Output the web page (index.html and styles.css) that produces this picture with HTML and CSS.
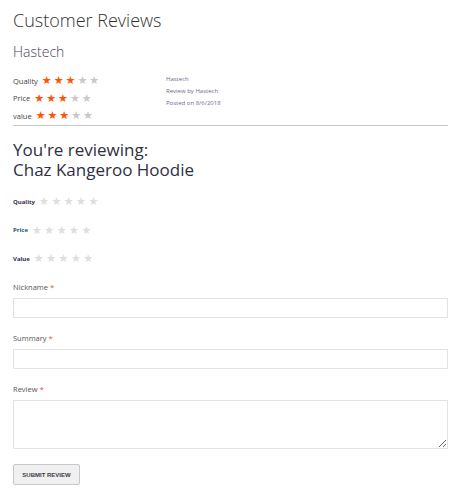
FILE: index.html
```html
<!DOCTYPE html>
<html>
<head>
<meta charset="utf-8">
<link rel="stylesheet" href="styles.css">
</head>
<body>
<div class="page">
  <h1 class="title">Customer Reviews</h1>
  <div class="review">
    <div class="review-author">Hastech</div>
    <div class="review-body">
      <div class="ratings">
        <div class="rating-row"><span class="rlabel">Quality</span><span class="stars"><span class="on">★★★</span><span class="off">★★</span></span></div>
        <div class="rating-row"><span class="rlabel">Price</span><span class="stars"><span class="on">★★★</span><span class="off">★★</span></span></div>
        <div class="rating-row"><span class="rlabel">value</span><span class="stars"><span class="on">★★★</span><span class="off">★★</span></span></div>
      </div>
      <div class="details">
        <div class="detail">Hastech</div>
        <div class="detail">Review by Hastech</div>
        <div class="detail">Posted on <span class="date">8/6/2018</span></div>
      </div>
    </div>
  </div>
  <h2 class="reviewing"><span class="line">You're reviewing:</span><span class="line">Chaz Kangeroo Hoodie</span></h2>
  <div class="form-ratings">
    <div class="frow"><span class="flabel q">Quality</span><span class="fstars">★★★★★</span></div>
    <div class="frow"><span class="flabel p">Price</span><span class="fstars">★★★★★</span></div>
    <div class="frow"><span class="flabel v">Value</span><span class="fstars">★★★★★</span></div>
  </div>
  <div class="field first">
    <label class="label">Nickname <span class="req">*</span></label>
    <input class="input" type="text">
  </div>
  <div class="field">
    <label class="label">Summary <span class="req">*</span></label>
    <input class="input" type="text">
  </div>
  <div class="field">
    <label class="label">Review <span class="req">*</span></label>
    <textarea class="textarea"></textarea>
  </div>
  <button class="submit">SUBMIT REVIEW</button>
</div>
</body>
</html>
```
FILE: styles.css
```css
* { box-sizing: border-box; }
body {
  margin: 0;
  background: #fff;
  font-family: "Open Sans", "Liberation Sans", sans-serif;
  color: #333;
}
.page {
  padding: 8px 10px 0 13px;
}
.title {
  margin: 0;
  font-size: 18px;
  line-height: 24px;
  font-weight: 300;
  color: #333;
}
.review-author {
  margin-top: 11px;
  font-size: 14px;
  line-height: 18px;
  font-weight: 300;
  color: #4d3f5f;
}
.review-body {
  display: flex;
  margin-top: 11px;
  padding-bottom: 0;
  border-bottom: 1px solid #c8c8c8;
}
.ratings {
  width: 153px;
}
.rating-row {
  display: flex;
  align-items: center;
  height: 17.5px;
  font-size: 7.5px;
  color: #444;
}
.rlabel { margin-right: 4px; }
.stars {
  font-family: "DejaVu Sans", sans-serif;
  font-size: 11px;
  letter-spacing: 2px;
}
.stars .on { color: #ff5500; }
.stars .off { color: #c9c9c9; }
.details {
  font-size: 6px;
  color: #6a6a8a;
  padding-top: 3px;
}
.detail { height: 12px; }
.date { color: #7a6a9a; }
.reviewing {
  margin: 14px 0 0;
  font-size: 17px;
  font-weight: 400;
  color: #2f2f3f;
}
.reviewing .line {
  display: block;
  height: 20px;
  line-height: 20px;
}
.form-ratings {
  margin-top: 8px;
}
.frow {
  display: flex;
  align-items: center;
  height: 28.5px;
}
.flabel {
  font-size: 6px;
  font-weight: 700;
  margin-right: 4px;
}
.flabel.q { color: #3a2a50; }
.flabel.p { color: #1d4f8c; }
.flabel.v { color: #2a2a60; }
.fstars {
  font-family: "DejaVu Sans", sans-serif;
  font-size: 11px;
  letter-spacing: 2.5px;
  color: #dedede;
}
.field {
  margin-top: 14px;
}
.field.first { margin-top: 8px; }
.label {
  display: block;
  font-size: 7.5px;
  line-height: 12px;
  color: #555;
  margin-bottom: 5px;
}
.req { color: #e8504d; font-size: 8px; }
.input {
  display: block;
  width: 100%;
  height: 20px;
  border: 1px solid #e3e3e3;
  background: #fff;
  margin: 0;
  padding: 0 5px;
}
.textarea {
  display: block;
  width: 100%;
  height: 49px;
  border: 1px solid #e3e3e3;
  background: #fff;
  margin: 0;
  resize: vertical;
}
.submit {
  margin-top: 15px;
  width: 67px;
  height: 21px;
  padding: 0;
  font-family: "Liberation Sans", sans-serif;
  font-size: 6px;
  font-weight: 700;
  color: #3a3a4a;
  background: #f0f0f0;
  border: 1px solid #c8c8c8;
  border-radius: 2px;
}
```
